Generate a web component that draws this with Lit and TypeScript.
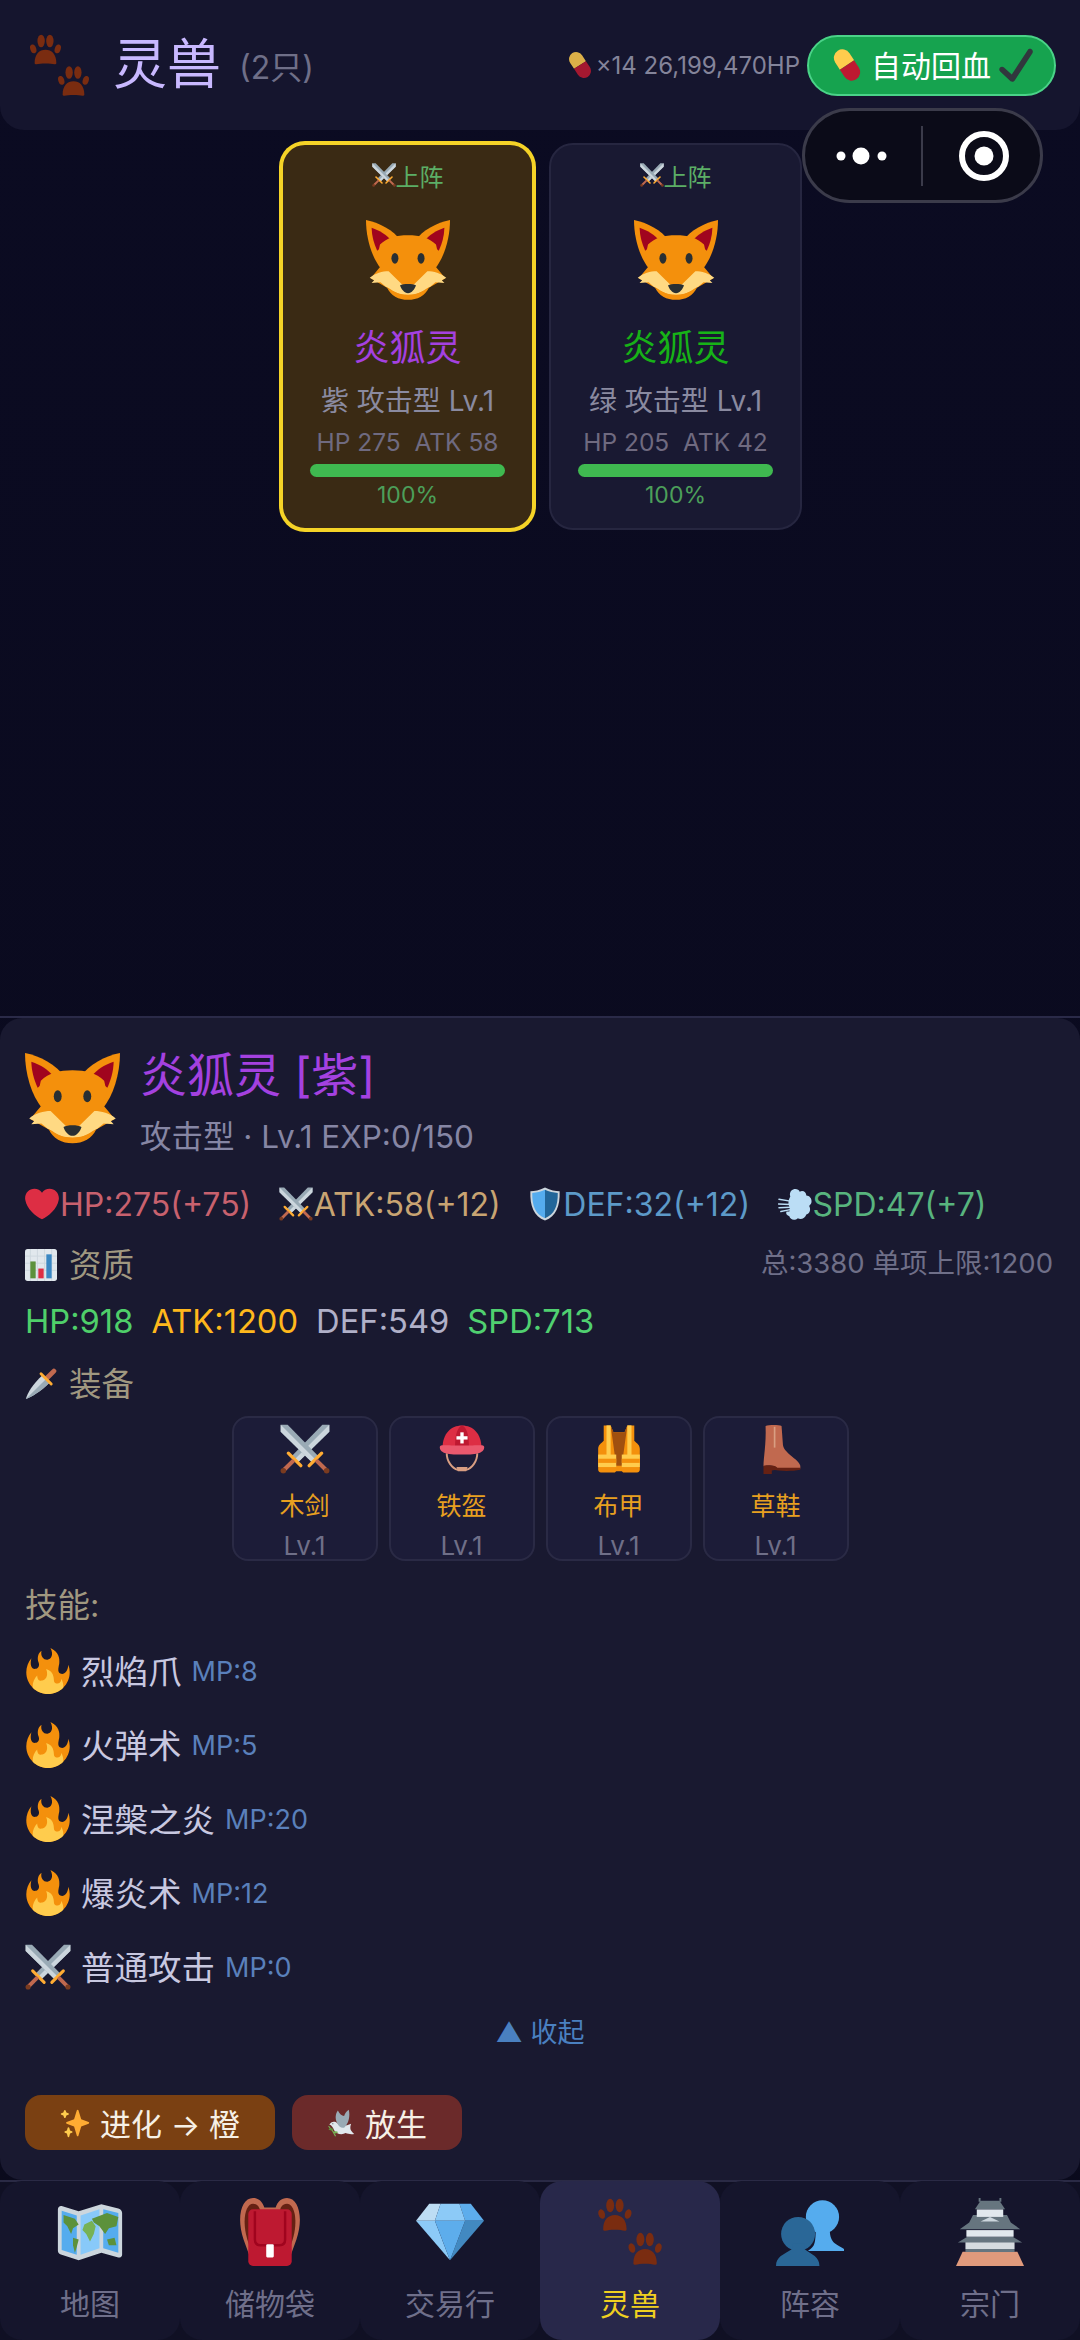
import { LitElement, html, css, svg } from "lit";
import { customElement } from "lit/decorators.js";

const swordHalf = svg`
  <polygon points="0.5,0.5 5.5,0.5 28,23.5 23.5,28 0.5,5.5" fill="#99AAB5"/>
  <polygon points="0.5,0.5 25.7,25.7 23.5,28 0.5,5.5" fill="#CCD6DD"/>
  <line x1="21" y1="30" x2="30" y2="21" stroke="#FFAC33" stroke-width="2.4" stroke-linecap="round"/>
  <line x1="26" y1="26" x2="33" y2="33" stroke="#C1694F" stroke-width="3"/>
  <circle cx="33.6" cy="33.6" r="2" fill="#7a3b20"/>`;

const paw = svg`
  <ellipse cx="3" cy="8.5" rx="1.7" ry="2.6" transform="rotate(-18 3 8.5)"/>
  <ellipse cx="7.5" cy="4" rx="2.1" ry="3.6"/>
  <ellipse cx="12.5" cy="4" rx="2.1" ry="3.6"/>
  <ellipse cx="17" cy="8.5" rx="1.7" ry="2.6" transform="rotate(18 17 8.5)"/>
  <path d="M3.8 16.5 C3.8 11.5 6.5 9 10 9 C13.5 9 16.2 11.5 16.2 16.5 C16.2 17.5 15 17.4 13 17 C11 16.8 9 16.8 7 17 C5 17.4 3.8 17.5 3.8 16.5z"/>`;

const ICONS: Record<string, unknown> = {
  swords: svg`<g transform="translate(36 0) scale(-1 1)">${swordHalf}</g>${swordHalf}`,
  fox: svg`
    <path d="M0 0 C5.5 1 12 4.5 15 9 L6.5 21 C2.5 16 0 8 0 0z" fill="#F4900C"/>
    <path d="M36 0 C30.5 1 24 4.5 21 9 L29.5 21 C33.5 16 36 8 36 0z" fill="#F4900C"/>
    <path d="M2.4 3.3 C6 4.5 9 6.5 10.6 8.6 L4.8 13.2 C3.4 10 2.5 7 2.4 3.3z" fill="#A0041E"/>
    <path d="M33.6 3.3 C30 4.5 27 6.5 25.4 8.6 L31.2 13.2 C32.6 10 33.5 7 33.6 3.3z" fill="#A0041E"/>
    <path d="M18 6.5 C13 6.5 9 7.5 6 10.5 L5 15 L7 19 L4.5 22 L2 25 L9 29 L13 33 H23 L27 29 L34 25 L31.5 22 L29 19 L31 15 L30 10.5 C27 7.5 23 6.5 18 6.5z" fill="#F4900C"/>
    <path d="M1.6 24.8 C4 22.8 7 22 9.7 22 L15.6 27.8 H20.4 L26.3 22 C29 22 32 22.8 34.4 24.8 L32.5 25.8 L33.6 27 L29.8 26.7 L27.5 28.6 C25 29.6 23 32.2 18 32.2 C13 32.2 11 29.6 8.5 28.6 L6.2 26.7 L2.4 27 L3.5 25.8z" fill="#FFD983"/>
    <path d="M9 28.8 C12 31.2 14.5 32 18 32 C21.5 32 24 31.2 27 28.8 C25.5 32.5 22 34.2 18 34.2 C14 34.2 10.5 32.5 9 28.8z" fill="#F4900C"/>
    <path d="M14.6 28 C16 27.2 20 27.2 21.4 28 C21 29.6 19.5 31.4 18 31.4 C16.5 31.4 15 29.6 14.6 28z" fill="#292F33"/>
    <ellipse cx="12.4" cy="16.4" rx="1.5" ry="2.3" fill="#292F33"/>
    <ellipse cx="23.6" cy="16.4" rx="1.5" ry="2.3" fill="#292F33"/>`,
  heart: svg`<path fill="#DD2E44" d="M35.885 11.833c0-5.45-4.418-9.868-9.867-9.868-3.308 0-6.227 1.633-8.018 4.129-1.791-2.496-4.71-4.129-8.017-4.129-5.45 0-9.868 4.417-9.868 9.868 0 .772.098 1.52.266 2.241C1.751 22.587 11.216 31.568 18 34.034c6.783-2.466 16.249-11.447 17.617-19.959.17-.721.268-1.469.268-2.242z"/>`,
  shield: svg`
    <path d="M18 0.5 C24 3.5 29 4.5 33.5 4.5 C34 20 30 31 18 35.5 C6 31 2 20 2.5 4.5 C7 4.5 12 3.5 18 0.5z" fill="#CCD6DD"/>
    <path d="M18 3 V33 C8 29 4.2 20 4.5 6.3 C9 6.2 14 5 18 3z" fill="#55ACEE"/>
    <path d="M18 3 V33 C28 29 31.8 20 31.5 6.3 C27 6.2 22 5 18 3z" fill="#226699"/>`,
  dash: svg`
    <path fill="#BBDDF5" d="M14 4 C17 1 22 2 23 5 C26 3 30 5 30 9 C33 9 36 12 35.5 16 C35.3 18 34 19 33 20 C35 23 34 28 30 29 C29 33 24 35 21 33 C18 36 13 35 12 31 C9 30 8 28 9 26 H12 C13 24 12 20 11 18 C11 14 12 12 13 10 C12 8 13 5 14 4z"/>
    <g stroke="#BBDDF5" stroke-width="1.5" stroke-linecap="round">
      <line x1="1" y1="13" x2="13" y2="15"/><line x1="0.5" y1="18" x2="13" y2="18.5"/><line x1="1" y1="22" x2="13" y2="21.5"/><line x1="3" y1="26" x2="13" y2="24"/>
    </g>`,
  chart: svg`
    <rect width="36" height="36" rx="3" fill="#E1E8ED"/>
    <g stroke="#CCD6DD" stroke-width="1"><line x1="6" y1="0" x2="6" y2="36"/><line x1="14" y1="0" x2="14" y2="36"/><line x1="22" y1="0" x2="22" y2="36"/><line x1="30" y1="0" x2="30" y2="36"/><line x1="0" y1="8" x2="36" y2="8"/><line x1="0" y1="16" x2="36" y2="16"/><line x1="0" y1="24" x2="36" y2="24"/></g>
    <rect x="6" y="14" width="6" height="19" fill="#5C913B"/><rect x="15" y="22" width="6" height="11" fill="#DD2E44"/><rect x="24" y="6" width="6" height="27" fill="#3B88C3"/>`,
  dagger: svg`
    <path d="M1 35 C3 28 8 19 20 8 L28 16 C17 27 8 32 1 35z" fill="#CCD6DD"/>
    <path d="M1 35 L24 12 L28 16 C17 27 8 32 1 35z" fill="#99AAB5"/>
    <line x1="25" y1="11" x2="32.5" y2="3.5" stroke="#C1694F" stroke-width="5.5" stroke-linecap="round"/>
    <line x1="18" y1="6.5" x2="29.5" y2="18" stroke="#FFAC33" stroke-width="3.2" stroke-linecap="round"/>`,
  helmet: svg`
    <path d="M7 21 C7 27 11 32 15 33 H21 C25 32 29 27 29 21" fill="none" stroke="#D99E82" stroke-width="1.4"/>
    <path d="M14 31 L22 31 L21 34 H15z" fill="#D99E82"/>
    <path d="M4 17 C4 7 10 1 18 1 C26 1 32 7 32 17z" fill="#DD2E44"/>
    <path d="M13 16 C13 7 15 2 18 1 C21 2 23 7 23 16z" fill="#BE1931"/>
    <rect x="16.8" y="6" width="2.4" height="8" fill="#fff"/><rect x="14" y="8.8" width="8" height="2.4" fill="#fff"/>
    <path d="M2 16.5 C2 14.5 6 15.5 18 15.5 C30 15.5 34 14.5 34 16.5 C34 20.5 30 22 18 22 C6 22 2 20.5 2 16.5z" fill="#EA596E"/>`,
  vest: svg`
    <path d="M7 1 H12 L14 6 H22 L24 1 H29 L29 12 C31 14 33 15 33 18 V33 C33 34 32 35 31 35 H21 L20 34 H16 L15 35 H5 C4 35 3 34 3 33 V18 C3 15 5 14 7 12z" fill="#F4900C"/>
    <path d="M12 1 L14 6 H22 L24 1 L20 30 H16z" fill="#A0500F"/>
    <rect x="9" y="1" width="3" height="24" fill="#FFCC4D"/><rect x="24" y="1" width="3" height="24" fill="#FFCC4D"/>
    <rect x="3" y="22" width="13" height="9" fill="#FFCC4D"/><rect x="20" y="22" width="13" height="9" fill="#FFCC4D"/>
    <rect x="3" y="25" width="13" height="3" fill="#F4900C"/><rect x="20" y="25" width="13" height="3" fill="#F4900C"/>`,
  boot: svg`
    <path d="M10.5 1.5 C13 .5 20 .5 22 1.5 L23 15 C23.5 21 34 25 35.5 30 V32 H19 C17 29.5 13 29.5 9 30.5 C9 24 11 15 10.5 1.5z" fill="#C1694F"/>
    <line x1="17" y1="2" x2="17" y2="17" stroke="#D99E82" stroke-width="1.2"/>
    <path d="M9 30 C13 29.5 17 29.5 19 31.5 H35.5 V33 C30 34 24 34 20 33.5 C18 33 16 33 15 33.5 V36 H9z" fill="#662113"/>`,
  fire: svg`
    <path fill="#F4900C" d="M35 19c0-2.062-.367-4.039-1.04-5.868-.46 5.389-3.333 8.157-6.335 6.868-2.812-1.208-.917-5.917-.777-8.164.236-3.809-.012-8.169-6.931-11.794 2.875 5.5.333 8.917-2.333 9.125-2.958.231-5.667-2.542-4.667-7.042-3.238 2.386-3.332 6.402-2.333 9 1.042 2.708-.042 4.958-2.583 5.208-2.84.28-4.418-3.041-2.963-8.333C2.52 10.965 1 14.805 1 19c0 9.389 7.611 17 17 17s17-7.611 17-17z"/>
    <path fill="#FFCC4D" d="M28.394 23.999c.148 3.084-2.561 4.293-4.019 3.709-2.106-.843-1.541-2.291-2.083-5.291s-2.625-5.083-5.708-6c2.25 6.333-1.247 8.667-3.08 9.084-1.872.426-3.753-.001-3.968-4.007C7.352 23.668 6 26.676 6 30c0 .368.023.73.055 1.09C9.125 34.124 13.342 36 18 36s8.875-1.876 11.945-4.91c.032-.36.055-.722.055-1.09 0-2.187-.584-4.236-1.606-6.001z"/>`,
  pill: svg`<g transform="rotate(-33 18 18)">
    <path d="M9.5 18 V9.5 a8.5 8.5 0 0 1 17 0 V18z" fill="#FFCC4D"/>
    <path d="M9.5 18 H26.5 V26.5 a8.5 8.5 0 0 1 -17 0z" fill="#BE1931"/></g>`,
  check: svg`<path fill="#31373D" d="M34.459 1.375c-1.391-.902-3.248-.506-4.149.884L13.5 28.17l-8.198-7.58c-1.217-1.125-3.114-1.051-4.239.166-1.125 1.216-1.051 3.115.166 4.239l10.764 9.952s.309.266.452.359c.504.328 1.07.484 1.63.484.982 0 1.945-.482 2.52-1.368L35.343 5.524c.902-1.39.506-3.248-.884-4.149z"/>`,
  sparkles: svg`
    <path fill="#FFAC33" d="M34.347 16.893l-8.899-3.294-3.323-10.891c-.128-.42-.517-.708-.956-.708-.439 0-.828.288-.956.708l-3.322 10.891-8.9 3.294c-.393.146-.653.519-.653.938 0 .418.26.793.653.938l8.895 3.293 3.324 11.223c.126.424.516.715.959.715.442 0 .833-.291.959-.716l3.324-11.223 8.896-3.293c.391-.144.652-.518.652-.937 0-.418-.261-.792-.653-.938z"/>
    <path fill="#FFCC4D" d="M14.347 27.894l-2.314-.856-.9-3.3c-.118-.436-.513-.738-.964-.738-.451 0-.846.302-.965.737l-.9 3.3-2.313.856c-.393.145-.653.52-.653.938 0 .418.26.793.653.938l2.301.853.907 3.622c.112.444.511.756.97.756.459 0 .858-.312.97-.757l.907-3.622 2.301-.853c.393-.144.653-.519.653-.937 0-.418-.26-.793-.653-.937z"/>
    <path fill="#FFCC4D" d="M10.009 6.231l-2.364-.875-.876-2.365c-.145-.393-.519-.653-.938-.653-.418 0-.792.26-.938.653l-.875 2.365-2.365.875c-.393.146-.653.52-.653.938 0 .418.26.793.653.938l2.365.875.875 2.365c.146.393.52.653.938.653.418 0 .792-.26.938-.653l.875-2.365 2.365-.875c.393-.146.653-.52.653-.938 0-.418-.26-.793-.653-.938z"/>`,
  dove: svg`
    <path d="M3 20 C5 16 10 15 13 18 C17 23 24 22 31 19 C29 25 30 28 35 32 C31 33 27 32 24 31 C19 34 11 32 9 27 C8 24 6 21 3 20z" fill="#E1E8ED"/>
    <path d="M13 18 C10 12 11 6 14 2 C16 6 19 9 22 9 C23 6 25 3 28 1 C30 9 28 19 22 24 C18 25 15 22 13 18z" fill="#99AAB5"/>
    <path d="M2 22 C5 25 9 30 11 35" fill="none" stroke="#77B255" stroke-width="1.4"/>
    <ellipse cx="5" cy="26" rx="3" ry="1.4" fill="#5C913B"/><ellipse cx="11" cy="30" rx="3" ry="1.4" fill="#77B255"/>
    <circle cx="7.5" cy="19" r=".7" fill="#292F33"/>`,
  map: svg`
    <path d="M1 6 C1 5 2 4 3 4.3 L12 7 L24 3.3 L33 5.5 C34.5 6 35 7 35 8 V30 C35 31 34 31.7 33 31.5 L24 29 L12 33 L3 30 C2 29.8 1 29 1 28z" fill="#CCD6DD"/>
    <path d="M3 6.8 L11 9.3 V30 L3 27.5z" fill="#55ACEE"/>
    <path d="M13 9.3 L23 6 V26.6 L13 30z" fill="#88C9F9"/>
    <path d="M25 6 L33 8 V29 L25 26.6z" fill="#55ACEE"/>
    <path d="M4 9 L10 11 L12 14 L9 16 L8 19 L6 15 L4 13z" fill="#5C913B"/>
    <path d="M9 21 L12 22 L11 26 L10 29 L9 25z" fill="#5C913B"/>
    <path d="M15 14 L19 12 L21 15 L20 19 L18 23 L16 19 L14 17z" fill="#77B255"/>
    <path d="M19 11 L27 8 L33 10 L32 15 L28 16 L26 19 L23 15 L20 13z" fill="#5C913B"/>
    <path d="M27 22 L31 21 L32 25 L28 25z" fill="#5C913B"/>`,
  backpack: svg`
    <path d="M4 22 C0 10 3 0 9 0 C12 0 14 2 15 5 H21 C22 2 24 0 27 0 C33 0 36 10 32 22 L28 33 H8z" fill="#C1694F"/>
    <path d="M6 22 C3 12 5 3 9 3 C12 3 13 6 13 9 L11 31 H9z" fill="#662113"/>
    <path d="M30 22 C33 12 31 3 27 3 C24 3 23 6 23 9 L25 31 H27z" fill="#662113"/>
    <rect x="6.5" y="6" width="23" height="30" rx="2.5" fill="#BE1931"/>
    <path d="M10 7 V22 C10 24 11 25 13 25 H23 C25 25 26 24 26 22 V7" fill="none" stroke="#A0041E" stroke-width="1.3"/>
    <rect x="16" y="24.5" width="4" height="7" rx=".6" fill="#fff"/>`,
  gem: svg`
    <path fill="#BDDDF4" d="M13 3H7l-7 9h10z"/><path fill="#5DADEC" d="M36 12l-7-9h-6l3 9z"/><path fill="#8CCAF7" d="M26 12l-3-9H13l-3 9z"/>
    <path fill="#8CCAF7" d="M10 12l8 21L0 12z"/><path fill="#4289C1" d="M26 12l-8 21 18-21z"/><path fill="#5DADEC" d="M26 12H10l8 21z"/>`,
  people: svg`
    <circle cx="24.6" cy="10" r="8.8" fill="#55ACEE"/>
    <path d="M17 28 C20 26 21 25 21 17 H28.5 C28.5 24 32 24.5 36 27 V28z" fill="#55ACEE"/>
    <circle cx="11.7" cy="19" r="9" fill="#2A6797"/>
    <path d="M0 36 C0 31 4 30 8.5 27 V24 H15 V27 C19 30 23 31 23 36z" fill="#2A6797"/>`,
  castle: svg`
    <polygon points="0,36 3.5,28.5 32.5,28.5 36,36" fill="#E09A7C"/>
    <rect x="5" y="27" width="26" height="1.6" fill="#66757F"/>
    <rect x="5" y="23" width="26" height="4" fill="#D5DBDF"/>
    <polygon points="1,23.5 6,20.5 30,20.5 35,23.5" fill="#66757F"/>
    <rect x="5.5" y="17" width="25" height="3.5" fill="#E1E8ED"/>
    <polygon points="2,16.5 7,13 9,9 27,9 29,13 34,16.5" fill="#66757F"/>
    <polygon points="13,12.5 18,10 23,12.5" fill="#CCD6DD"/>
    <rect x="11" y="6" width="14" height="4" fill="#E1E8ED"/>
    <polygon points="10,6 13,1.5 23,1.5 26,6" fill="#66757F"/>
    <rect x="12" y="0" width="1" height="2" fill="#66757F"/><rect x="23" y="0" width="1" height="2" fill="#66757F"/>`,
  paws: svg`<g fill="#7a2c10">
    <g>${paw}</g>
    <g transform="translate(16 18)">${paw}</g></g>`,
};

function icon(name: string, size: number) {
  return html`<svg class="ic" width=${size} height=${size} viewBox="0 0 36 36" aria-hidden="true">${ICONS[name]}</svg>`;
}

const PETS = [
  { cls: "purple", q: "紫", hp: 275, atk: 58, sel: true },
  { cls: "green", q: "绿", hp: 205, atk: 42, sel: false },
];
const STATS = [
  { i: "heart", t: "HP:275(+75)", c: "s-hp" },
  { i: "swords", t: "ATK:58(+12)", c: "s-atk" },
  { i: "shield", t: "DEF:32(+12)", c: "s-def" },
  { i: "dash", t: "SPD:47(+7)", c: "s-spd" },
];
const EQUIP = [
  { i: "swords", n: "木剑" },
  { i: "helmet", n: "铁盔" },
  { i: "vest", n: "布甲" },
  { i: "boot", n: "草鞋" },
];
const SKILLS = [
  { i: "fire", n: "烈焰爪", mp: 8 },
  { i: "fire", n: "火弹术", mp: 5 },
  { i: "fire", n: "涅槃之炎", mp: 20 },
  { i: "fire", n: "爆炎术", mp: 12 },
  { i: "swords", n: "普通攻击", mp: 0 },
];
const NAV = [
  { i: "map", n: "地图" },
  { i: "backpack", n: "储物袋" },
  { i: "gem", n: "交易行" },
  { i: "paws", n: "灵兽", on: true },
  { i: "people", n: "阵容" },
  { i: "castle", n: "宗门" },
];

@customElement("app-root")
export class AppRoot extends LitElement {
  static styles = css`
    :host {
      display: block;
      width: 1080px;
      height: 2340px;
      font-family: "Inter", "Noto Sans CJK SC", sans-serif;
      font-weight: 400;
      color: #c8c8e0;
      overflow: hidden;
    }
    * { box-sizing: border-box; }
    .ic { display: block; flex: none; }
    .page {
      position: relative;
      height: 2340px;
      display: flex;
      flex-direction: column;
      background: linear-gradient(#0b0b22, #0a0a1c);
    }
    /* header */
    .header {
      height: 130px;
      flex: none;
      display: flex;
      align-items: center;
      padding: 0 24px 0 28px;
      background: #15152e;
      border-radius: 0 0 24px 24px;
    }
    .title { font-size: 54px; line-height: 64px; color: #c8b8ff; margin-left: 22px; }
    .count { font-size: 32px; color: #6f6f88; margin-left: 18px; }
    .meds { margin-left: auto; display: flex; align-items: center; font-size: 24px; color: #84849a; }
    .meds .ic { opacity: .85; margin-right: 1px; }
    .auto {
      margin-left: 7px;
      height: 61px;
      width: 249px;
      display: flex;
      align-items: center;
      padding-left: 20px;
      background: #16a34f;
      border: 2px solid #4ad388;
      border-radius: 31px;
      color: #fff;
      font-size: 30px;
    }
    .auto span { margin: 0 8px 0 6px; padding-bottom: 3px; }
    .capsule {
      position: absolute;
      left: 802px;
      top: 108px;
      width: 241px;
      height: 95px;
      border: 3px solid #3b3b4a;
      border-radius: 48px;
      background: #0b0b18;
    }
    /* roster */
    .roster {
      flex: 1;
      display: flex;
      justify-content: center;
      align-items: flex-start;
      gap: 15px;
      padding: 13px 0 0 3px;
      border-bottom: 2px solid #2a2a48;
    }
    .card {
      width: 253px;
      height: 387px;
      display: flex;
      flex-direction: column;
      align-items: center;
      background: #191932;
      border: 2px solid #262640;
      border-radius: 24px;
    }
    .card.sel {
      background: #3a2a14;
      border-color: #f5d327;
      box-shadow: 0 0 0 2px #f5d327;
    }
    .tag { display: flex; align-items: center; height: 30px; margin-top: 15px; font-size: 24px; color: #5cae66; }
    .fox { margin-top: 30px; }
    .name { font-size: 36px; line-height: 44px; margin-top: 22px; }
    .purple { color: #a441e0; }
    .green { color: #17b217; }
    .sub { font-size: 28px; line-height: 36px; margin-top: 13px; color: #8a8aa0; }
    .hpatk { font-size: 24.5px; line-height: 34px; margin-top: 6px; color: #6f6a80; white-space: pre; }
    .bar { width: 195px; height: 13px; flex: none; border-radius: 7px; background: #3fb950; margin-top: 5px; }
    .pct { font-size: 23px; line-height: 30px; margin-top: 3px; color: #4c9f5a; }
    /* detail panel */
    .panel {
      height: 1162px;
      flex: none;
      padding: 29px 25px 0;
      background: #191930;
      border-radius: 22px;
    }
    .head { display: flex; align-items: center; height: 107px; }
    .head-text { margin-left: 20px; }
    .pname { font-size: 47px; line-height: 56px; color: #a441e0; }
    .psub { font-size: 31.5px; line-height: 34px; margin-top: 17px; color: #8686a4; }
    .stats { display: flex; gap: 27.5px; height: 40px; margin-top: 30px; font-size: 32px; }
    .stat { display: flex; align-items: center; gap: 1px; white-space: nowrap; }
    .s-hp { color: #c8616e; }
    .s-atk { color: #c8a472; }
    .s-def { color: #5d9ac8; }
    .s-spd { color: #58b47e; }
    .sec { display: flex; align-items: center; height: 40px; font-size: 32.5px; color: #a09880; }
    .sec .ic { margin: 2px 12px 0 0; }
    .lbl { padding-bottom: 3px; }
    .qual { margin-top: 20px; }
    .total { margin-left: auto; margin-right: 2px; padding-bottom: 6px; font-size: 27.5px; color: #6f6f88; }
    .vals { display: flex; gap: 18px; height: 40px; margin-top: 17px; align-items: center; font-size: 32.7px; }
    .v-hp { color: #4fcf6a; }
    .v-atk { color: #ffb81c; }
    .v-def { color: #b0b0c8; }
    .v-spd { color: #50d070; }
    .eqh { margin-top: 22px; }
    .equip { display: flex; justify-content: center; gap: 11px; margin-top: 13px; }
    .eq {
      width: 146px;
      height: 145px;
      display: flex;
      flex-direction: column;
      align-items: center;
      background: #1c1c38;
      border: 2px solid #2a2a45;
      border-radius: 16px;
      padding-top: 6px;
    }
    .eq-n { font-size: 25px; line-height: 34px; margin-top: 15px; color: #e8a020; }
    .eq-l { font-size: 26px; line-height: 30px; margin-top: 8px; color: #6f6f88; }
    .skh { margin-top: 23px; }
    .skills { margin-top: 10px; }
    .skill { height: 74px; display: flex; align-items: center; }
    .sk-n { margin-left: 10px; padding-bottom: 4px; font-size: 33.5px; color: #c8c8e0; }
    .sk-m { margin-left: 10px; font-size: 27px; color: #5a80bb; }
    .fold { height: 40px; margin-top: 9px; text-align: center; font-size: 27px; line-height: 40px; color: #4a80c0; }
    .btns { display: flex; gap: 17px; margin-top: 42px; }
    .btn { height: 55px; display: flex; align-items: center; justify-content: center; gap: 10px; border-radius: 16px; font-size: 31px; color: #f6f0e6; }
    .evo { width: 250px; background: #7a4012; }
    .rel { width: 170px; background: #6b2a2a; }
    /* nav */
    .nav {
      height: 160px;
      flex: none;
      display: grid;
      grid-template-columns: repeat(6, 1fr);
      background: #101024;
      border-top: 2px solid #2a2a45;
    }
    .tab {
      margin-top: -1px;
      display: flex;
      flex-direction: column;
      align-items: center;
      background: #15152c;
      border-radius: 22px;
      padding-top: 17px;
      color: #6f6f8a;
      font-size: 30px;
    }
    .tab span { line-height: 40px; margin-top: 18px; }
    .tab.on { background: #28284a; color: #f0d020; }
  `;

  render() {
    return html`<div class="page">
      <div class="header">
        ${icon("paws", 63)}
        <div class="title">灵兽</div>
        <div class="count">(2只)</div>
        <div class="meds">${icon("pill", 30)}×14 26,199,470HP</div>
        <div class="auto">${icon("pill", 36)}<span>自动回血</span>${icon("check", 34)}</div>
      </div>
      <div class="capsule">
        <svg width="235" height="89" viewBox="0 0 235 89" class="ic">
          <circle cx="36" cy="45" r="4.5" fill="#fff"/><circle cx="56" cy="45" r="8.5" fill="#fff"/><circle cx="77" cy="45" r="4.5" fill="#fff"/>
          <line x1="117" y1="15" x2="117" y2="75" stroke="#3b3b4a" stroke-width="2"/>
          <circle cx="179" cy="45" r="22" fill="none" stroke="#fff" stroke-width="6"/><circle cx="179" cy="45" r="9.5" fill="#fff"/>
        </svg>
      </div>
      <div class="roster">
        ${PETS.map((p) => html`<div class="card ${p.sel ? "sel" : ""}">
          <div class="tag">${icon("swords", 24)}上阵</div>
          <div class="fox">${icon("fox", 84)}</div>
          <div class="name ${p.cls}">炎狐灵</div>
          <div class="sub">${p.q} 攻击型 Lv.1</div>
          <div class="hpatk">HP ${p.hp}  ATK ${p.atk}</div>
          <div class="bar"></div>
          <div class="pct">100%</div>
        </div>`)}
      </div>
      <div class="panel">
        <div class="head">
          ${icon("fox", 95)}
          <div class="head-text">
            <div class="pname">炎狐灵 [紫]</div>
            <div class="psub">攻击型 · Lv.1 EXP:0/150</div>
          </div>
        </div>
        <div class="stats">
          ${STATS.map((s) => html`<div class="stat ${s.c}">${icon(s.i, 34)}${s.t}</div>`)}
        </div>
        <div class="sec qual">${icon("chart", 32)}<span class="lbl">资质</span><span class="total">总:3380 单项上限:1200</span></div>
        <div class="vals">
          <span class="v-hp">HP:918</span><span class="v-atk">ATK:1200</span><span class="v-def">DEF:549</span><span class="v-spd">SPD:713</span>
        </div>
        <div class="sec eqh">${icon("dagger", 32)}<span class="lbl">装备</span></div>
        <div class="equip">
          ${EQUIP.map((e) => html`<div class="eq">${icon(e.i, 50)}<div class="eq-n">${e.n}</div><div class="eq-l">Lv.1</div></div>`)}
        </div>
        <div class="sec skh"><span class="lbl">技能:</span></div>
        <div class="skills">
          ${SKILLS.map((s) => html`<div class="skill">${icon(s.i, 46)}<span class="sk-n">${s.n}</span><span class="sk-m">MP:${s.mp}</span></div>`)}
        </div>
        <div class="fold">▲ 收起</div>
        <div class="btns">
          <div class="btn evo">${icon("sparkles", 30)}进化 → 橙</div>
          <div class="btn rel">${icon("dove", 28)}放生</div>
        </div>
      </div>
      <div class="nav">
        ${NAV.map((n) => html`<div class="tab ${n.on ? "on" : ""}">${icon(n.i, 68)}<span>${n.n}</span></div>`)}
      </div>
    </div>`;
  }
}
